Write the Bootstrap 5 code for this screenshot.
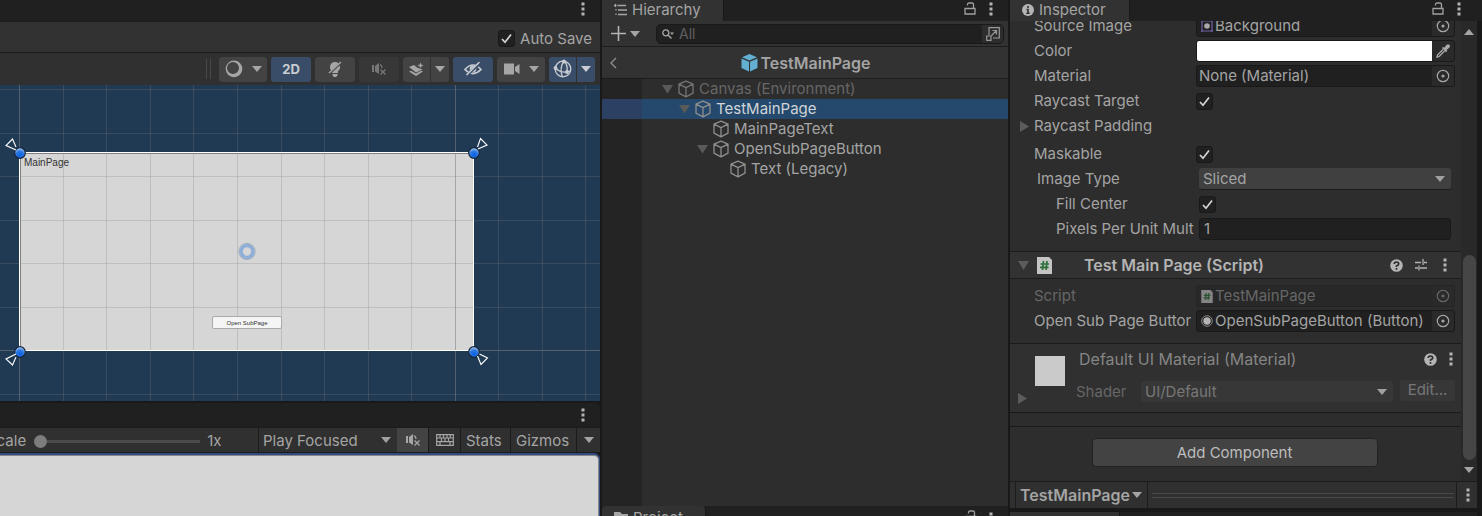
<!DOCTYPE html>
<html lang="en" data-bs-theme="dark">
<head>
<meta charset="utf-8">
<meta name="viewport" content="width=device-width, initial-scale=1">
<title>TestMainPage - Editor</title>
<link href="https://cdn.jsdelivr.net/npm/bootstrap@5.3.0/dist/css/bootstrap.min.css" rel="stylesheet">
<style>
:root{--edge:#191919;--bar:#202020;--pane:#2d2d2d;--head:#323232;--tool:#303030;--txt:#a4a4a4;--dim:#666;
--arrow:url("data:image/svg+xml,%3Csvg xmlns='http://www.w3.org/2000/svg' viewBox='0 0 10 6'%3E%3Cpath d='M0 0h10L5 6z' fill='%23a0a0a0'/%3E%3C/svg%3E");
--tick:url("data:image/svg+xml,%3Csvg xmlns='http://www.w3.org/2000/svg' viewBox='0 0 17 17'%3E%3Cpath d='M4 9l3 3.3L13 4.5' fill='none' stroke='%23d4d4d4' stroke-width='1.7'/%3E%3C/svg%3E")}
body{font-family:Inter,"Liberation Sans",sans-serif;font-size:15px;line-height:20px;color:var(--txt);background:var(--edge);overflow:hidden}
svg{display:block;flex:none}
button{color:inherit;padding:0;border:0;background:none;line-height:20px}
.editor{display:grid;grid-template-columns:minmax(0,602fr) minmax(0,408fr) minmax(0,472fr);height:100vh}
.column-pane{min-width:0;min-height:0;overflow:hidden}
.column-gap{padding-right:2px}
.tabs{background:var(--bar);height:21px;flex:none}
.tab-title{background:var(--head);height:21px;padding:0 0 1px 12px;gap:5px;border-right:1px solid #191919}
.tab-short{height:24px;border-radius:4px 4px 0 0}
.kebab{width:20px;height:17px;display:flex;align-items:center;justify-content:center}
.lock{margin:2px 5px 0 auto}
.tabs-right{padding-right:7px}
.tick{appearance:none;width:17px;height:17px;margin:0;flex:none;background:#202020 var(--tick) center/17px no-repeat;border:1px solid #191919;border-radius:3px}
/* scene */
.save-bar{height:31px;background:var(--head);border-top:1px solid #1c1c1c;padding:3px 8px 0 0;gap:5px;flex:none}
.scene-tools{height:33px;background:var(--tool);border-top:1px solid #1c1c1c;gap:4px;padding:0 5px 0 0;flex:none}
.tool{height:25px;width:40px;background:#434343;border-radius:3px;color:#a6a6a6;display:flex;align-items:center;justify-content:center;gap:9px;font-weight:700;font-size:13px}
.tool-wide{width:48px}.tool-main{width:27px;border-radius:3px 0 0 3px}.tool-drop{width:18px;border-radius:0 3px 3px 0}
.tool-on{background:#3a4d68;color:#c9cdd3}.tool-off{background:#373737;color:#777}
.split-tool{gap:1px}
.grip{width:5px;height:20px;border:solid #484848;border-width:0 1px;margin-right:4px}
.scene-view{position:relative;height:316px;background:#213a54;overflow:hidden;flex:none}
.scene-button{position:absolute;left:212px;top:231px;width:70px;height:13px;background:#f5f5f5;border:1px solid #aaa;border-radius:2px;color:#323232;font:6px/10px "Liberation Sans",sans-serif}
.scene-label{font:10px "Liberation Sans",sans-serif;fill:#323232}
.game-tabs{height:24px;margin-top:2px;padding-top:3px;border-radius:0 5px 0 0}
.game-tools{height:26px;background:var(--tool);border:solid #1c1c1c;border-width:1px 0;flex:none}
.game-tools>*{height:24px;border-right:1px solid #1c1c1c}
.game-tools>*:last-child{border-right:0}
.game-tools>.word{padding:2px 0 0 5px;text-align:left}
.scale-box{width:259px;flex:none;padding-top:2px}
.scale-box label{margin-left:-13px}
.scale-range{appearance:none;width:166px;height:14px;margin:0 7px 0 8px;background:linear-gradient(#4b4b4b,#4b4b4b) center/100% 3px no-repeat}
.scale-range::-webkit-slider-thumb{appearance:none;width:13px;height:13px;border-radius:50%;background:#7d7d7d}
.drop{appearance:none;color:var(--txt);border:0;background:var(--arrow) right 6px center/10px 6px no-repeat;padding:0 4px}
.play-mode{width:138px;padding-top:2px}
.cell{width:32px}.cell-wide{width:66px}.cell-last{width:23px}
.game-view{background:#d6d6d6;border:1px solid #888;border-left:0;border-bottom:0;border-radius:0 5px 0 0;box-shadow:0 -1px 0 1px #324a80;margin-top:2px;margin-right:1px;flex:1}
/* hierarchy */
.tab-hier{width:122px}.tab-insp{width:120px}.tab-proj{width:104px}
.find-bar{height:26px;background:var(--head);border-bottom:1px solid #1c1c1c;padding:0 4px 0 9px;flex:none}
.find-box{background:#202020;border:1px solid #191919;border-radius:5px;height:20px;overflow:hidden;margin-left:16px;padding-left:5px}
.find-box input{background:none;border:0;outline:0;width:100%;color:var(--txt);padding:0 0 0 5px;font-size:14px;line-height:18px}
.find-box input::placeholder{color:#5f5f5f;opacity:1}
.find-pick{width:21px;height:20px;flex:none;background:#2d2d2d;display:flex;align-items:center;justify-content:center}
.crumb{height:32px;background:var(--head);border-bottom:1px solid #1c1c1c;flex:none;padding-right:14px;font-size:16px}
.crumb a{color:var(--txt);text-decoration:none}
.crumb-name{gap:3px}
.tree{background:linear-gradient(90deg,#242424 40px,var(--pane) 40px);flex:1;margin-bottom:2px}
.tree li{height:20px;padding-left:57px;gap:4px}
.fold{color:#5a5a5a;margin-right:-6px}
.tree .lv1{padding-left:74px}.tree .lv2{padding-left:92px}.tree .lv3{padding-left:110px}.tree .lv4{padding-left:127px}
.tree .picked{background:linear-gradient(90deg,#2b4062 40px,#24496c 40px);color:#d0d4d8}
.project{height:10px}
/* inspector */
.insp-right{padding-right:13px}
.sheet{background:var(--pane);overflow:hidden}
.props{padding:0 6px 8px 24px}
.props.cut{margin-top:-6px}
.props.tight{padding-top:6px}
.prop{height:22px;margin-bottom:3px;display:flex;align-items:center}
.prop.foldout{margin-left:-15px;margin-bottom:6px}
.prop>label,.prop>.name{width:157px;margin-right:5px;flex:none;overflow:hidden;white-space:nowrap}
.prop.sub>label{width:165px;margin-right:0;padding-left:3px}
.prop.sub2>label{width:163px;margin-right:2px;padding-left:22px}
.slot{flex:1;height:22px;background:#202020;border:1px solid #191919;border-radius:3px;overflow:hidden;padding-left:2px;min-width:0}
.slot input{background:none;border:0;outline:0;flex:1;min-width:0;color:inherit;padding:0;line-height:20px}
.slot .pick{width:22px;height:20px;background:#2a2a2a;display:flex;justify-content:center;align-items:center}
.slot-icon{margin:0 1px 0 1px}
.slot .swatch{appearance:none;background:#fff;height:20px;flex:1;border:0;padding:0;margin-left:-2px}
.swatch::-webkit-color-swatch-wrapper{padding:0}.swatch::-webkit-color-swatch{border:0}
.combo{height:22px;background-color:#404040;border-radius:3px;border-bottom:1px solid #1c1c1c;line-height:20px}
.type-combo{width:252px}
.part-head{height:28px;background:var(--head);border:solid #1c1c1c;border-width:1px 0;padding:0 6px 0 8px;font-weight:600;font-size:16px;color:#b4b4b4}
.faded{color:var(--dim)}
.faded .slot{background:#282828;border-color:#242424}
.material{background:var(--tool);border:solid #1a1a1a;border-width:1px 0;height:70px;padding:5px 6px 0 8px}
.mat-name{color:#858585;font-size:16px}
.mat-name .q{margin:0 12px 0 auto}
.mat-name .more{margin-right:2px}
.thumb{width:30px;height:30px;background:#cacaca;margin:7px 14px 0 8px}
.shader-label{width:65px;margin:4px 0 0 -3px}
.combo.dimmed{color:#777;background-color:#373737;border-color:#303030;margin:4px 7px 0 0}
.edit-btn{width:55px;height:21px;background:#373737;border-radius:3px;color:#777}
.add-area{border-top:1px solid #1a1a1a;margin-top:13px;padding:11px 2px 0 0}
.add-btn{width:286px;height:29px;background:#434343;border:1px solid #222;border-radius:4px;color:#bdbdbd}
.rail{width:16px;background:#292929;flex:none;margin-right:5px}
.rail-up{transform:rotate(180deg)}
.rail .thumb-bar{width:13px;height:205px;border-radius:7px;background:#464646;margin-bottom:7px}
.preview-bar{height:27px;border-top:1px solid #1c1c1c;background:var(--tool);margin-right:5px;flex:none;padding-left:5px}
.preview-bar .pick-name{border:solid #1c1c1c;border-width:0 1px;padding:0 5px 0 4px;font-weight:600;font-size:16px;gap:2px}
.rule{flex:1;height:5px;margin:0 2px 0 4px;border:solid #484848;border-width:1px 0}
.preview-more{border-left:1px solid #1c1c1c;padding:0 7px 0 9px}
.below{height:4px;margin:4px 5px 0 0}
.below .tab-title{width:110px;height:4px}
</style>
</head>
<body>
<svg width="0" height="0" class="position-absolute" aria-hidden="true">
<defs>
<symbol id="dots" viewBox="0 0 4 14"><path d="M.5.5h3v3h-3zM.5 5.500h3v3h-3zM.5 10.500h3v3h-3z" fill="#b4b4b4"/></symbol>
<symbol id="lock" viewBox="0 0 12 13"><path d="M1 6.500h10v5.500H1zM3.500 3.500V2.500Q3.500 1 5 1h3Q9.500 1 9.500 2.500v4" fill="none" stroke="#a0a0a0" stroke-width="1.300"/></symbol>
<symbol id="down" viewBox="0 0 10 6"><path d="M0 0h10L5 6z" fill="currentColor"/></symbol>
<symbol id="cube" viewBox="0 0 18 18"><path d="M9 1.200l7 3v9L9 16.800l-7-3.600v-9zM2 4.200l7 3.500 7-3.500M9 7.700v9" fill="none" stroke="#8e8e8e" stroke-width="1.300" stroke-linejoin="round"/></symbol>
<symbol id="target" viewBox="0 0 14 14"><circle cx="7" cy="7" r="5.700" fill="none" stroke="currentColor" stroke-width="1.200"/><circle cx="7" cy="7" r="1.600" fill="currentColor"/></symbol>
<symbol id="mute" viewBox="0 0 14 12"><path d="M0 2h2v7H0zM3 3l4-3v11L3 8.500z" fill="currentColor"/><path d="M8 1.500q2 1 2 3.500M8.500 6.500l5 5M13.500 6.500l-5 5" stroke="currentColor" stroke-width="1.300" fill="none"/></symbol>
<symbol id="help" viewBox="0 0 13 13"><circle cx="6.500" cy="6.500" r="6.300" fill="#b4b4b4"/><path d="M4.300 5Q4.300 3 6.500 3T8.700 5Q8.700 6 6.500 7v1M6.500 9v1.700" fill="none" stroke="#2d2d2d" stroke-width="1.700"/></symbol>
<symbol id="script" viewBox="0 0 15 17"><path d="M0 0h12l3 3v14H0z" fill="#c4c4c4"/><path d="M6.500 4l-1 9M10 4L9 13M3.500 7h8.500M3 10.300h8.500" stroke="#2b7039" stroke-width="1.700"/></symbol>
<symbol id="fold-open" viewBox="0 0 20 9"><path d="M3 0h11L8.500 8.500z" fill="currentColor"/></symbol>
<radialGradient id="bead" cx=".5" cy=".7" r=".7"><stop offset="0" stop-color="#0b62e6"/><stop offset=".5" stop-color="#2a77e2"/><stop offset="1" stop-color="#b5cff0"/></radialGradient>
</defs>
</svg>
<main class="editor">
<section class="column-pane column-gap d-flex flex-column">
 <div class="tabs tabs-right d-flex justify-content-end"><button class="kebab" aria-label="Scene menu"><svg width="4" height="14"><use href="#dots"/></svg></button></div>
 <div class="save-bar d-flex align-items-center justify-content-end"><input class="tick" type="checkbox" id="save" checked><label for="save">Auto Save</label></div>
 <div class="scene-tools d-flex align-items-center justify-content-end">
  <span class="grip"></span>
  <button class="tool tool-wide" aria-label="Shading"><svg width="18" height="18" viewBox="0 0 18 18"><path fill-rule="evenodd" d="M9 .500a8.300 8.300 0 1 1 0 16.700A8.300 8.300 0 0 1 9 .500zM8 2a6 6 0 1 0 0 12A6 6 0 0 0 8 2z" fill="currentColor"/></svg><svg width="10" height="6"><use href="#down"/></svg></button>
  <button class="tool tool-on">2D</button>
  <button class="tool" aria-label="Lighting"><svg width="14" height="17" viewBox="0 0 14 17"><path d="M7 1a5 5 0 0 0-3 9v2h6v-2A5 5 0 0 0 7 1zM4.500 13h5v1.500L8 16H6l-1.500-1.500z" fill="currentColor"/><path d="M1 13L14 1" stroke="#434343" stroke-width="2"/><path d="M1 12L13 1" stroke="currentColor" stroke-width="1.400"/></svg></button>
  <button class="tool tool-off" aria-label="Audio"><svg width="14" height="12"><use href="#mute"/></svg></button>
  <div class="d-flex split-tool"><button class="tool tool-main" aria-label="Effects"><svg width="15" height="15" viewBox="0 0 15 15"><path d="M0 5l5-2 3 2.500L12 7l2 0-7 3.500zM0 9.500l2-.8 5 2.800 5-2.800 2 .8L7 14z" fill="currentColor"/><path d="M11.500 0l1 2.500L15 3.500l-2.500 1-1 2.500-1-2.500L8 3.500l2.500-1z" fill="currentColor" stroke="#434343" stroke-width=".4"/></svg></button><button class="tool tool-drop" aria-label="Effects options"><svg width="10" height="6"><use href="#down"/></svg></button></div>
  <button class="tool tool-on" aria-label="Visibility"><svg width="18" height="14" viewBox="0 0 18 14"><path d="M1 7.500Q9-1.500 17 7.500 9 15.500 1 7.500z" fill="none" stroke="currentColor" stroke-width="1.700"/><circle cx="9" cy="7" r="3.300" fill="currentColor"/><path d="M2 14L16 1" stroke="#3a4d68" stroke-width="3"/><path d="M2.500 13L15.500 0" stroke="currentColor" stroke-width="1.600"/></svg></button>
  <button class="tool tool-wide" aria-label="Camera"><svg width="16" height="12" viewBox="0 0 16 12"><path d="M0 .5h10v11H0zM11 4l4.500-3v10L11 8z" fill="currentColor"/></svg><svg width="10" height="6"><use href="#down"/></svg></button>
  <div class="d-flex split-tool"><button class="tool tool-main tool-on" aria-label="Gizmos"><svg width="20" height="20" viewBox="0 0 20 20"><g fill="none" stroke="currentColor" stroke-width="1.300"><circle cx="10" cy="10" r="7.800"/><path d="M11 2Q6 9 9.500 18M11 2q4 4 3 11M2.500 9q5 5 11.500 4l4-1.500"/></g><g fill="currentColor"><circle cx="11" cy="2.500" r="1.900"/><circle cx="2.500" cy="9" r="1.900"/><circle cx="14" cy="13" r="1.900"/></g></svg></button><button class="tool tool-drop tool-on" aria-label="Gizmo options"><svg width="10" height="6"><use href="#down"/></svg></button></div>
 </div>
 <div class="scene-view">
  <svg width="100%" height="316">
   <path d="M20 68h454v198H20z" fill="#d6d6d6"/>
   <path d="M63.500 0v316M106.500 0v316M150.500 0v316M193.500 0v316M237.500 0v316M281.500 0v316M324.500 0v316M368.500 0v316M411.500 0v316M498.500 0v316M542.500 0v316M585.500 0v316M0 4.500h602M0 48.500h602M0 91.500h602M0 135.500h602M0 178.500h602M0 222.500h602M0 309.500h602" stroke="#808080" stroke-opacity=".26"/>
   <path d="M19.500 0v316M455.500 0v316M0 265.500h602" stroke="#808080" stroke-opacity=".55"/>
   <path d="M20.500 266V68.500H473" fill="none" stroke="#808080"/>
   <path d="M19.500 67.500h454v198h-454z" fill="none" stroke="#fff"/>
   <text x="24" y="81" class="scene-label">MainPage</text>
   <g fill="none"><circle cx="247" cy="166.500" r="6" stroke="#8fafd8" stroke-width="3.600"/><circle cx="247" cy="166.500" r="8.200" stroke="#a4b0be" stroke-width="1"/></g>
   <g fill="url(#bead)" stroke="#14253a" stroke-width="1.200"><circle cx="20" cy="68" r="5.300"/><circle cx="474" cy="68" r="5.300"/><circle cx="20" cy="267" r="5.300"/><circle cx="474" cy="267" r="5.300"/></g>
   <g fill="none" stroke="#fff" stroke-width="1.100"><path d="M16 65L6 60.500 12.500 54l3.500 8M477.500 62l3-8.500 6.500 6.500-9 4M16 269l-10 5 6.500 6 3.500-8M477.500 271l3.500 8.500 6.500-6.500-8-4"/></g>
  </svg>
  <button class="scene-button">Open SubPage</button>
 </div>
 <div class="tabs tabs-right game-tabs d-flex justify-content-end"><button class="kebab" aria-label="Game menu"><svg width="4" height="14"><use href="#dots"/></svg></button></div>
 <div class="game-tools d-flex">
  <div class="scale-box d-flex align-items-center"><label for="scale">Scale</label><input id="scale" class="scale-range" type="range" min="1" max="5" step="1" value="1"><span>1x</span></div>
  <select class="drop play-mode" aria-label="Play mode"><option>Play Focused</option></select>
  <button class="tool cell rounded-0" aria-label="Mute"><svg width="14" height="12"><use href="#mute"/></svg></button>
  <button class="cell d-flex align-items-center justify-content-center" aria-label="Shortcuts"><svg width="18" height="12" viewBox="0 0 18 12"><path d="M.7.700h16.600v10.600H.7zM.7 4h16.600M.7 7.700h16.600M4 .700V4M7.500.700V4M11 .700V4M14.300.700V4M5.500 4v3.700M9 4v3.700M12.500 4v3.700M4 7.700v3.600M14 7.700v3.600" fill="none" stroke="#a6a6a6" stroke-width="1.200"/></svg></button>
  <button class="word flex-fill">Stats</button>
  <button class="word cell-wide">Gizmos</button>
  <button class="cell-last d-flex align-items-center justify-content-center" aria-label="Gizmo list"><svg width="10" height="6"><use href="#down"/></svg></button>
 </div>
 <div class="game-view"></div>
</section>

<section class="column-pane column-gap d-flex flex-column">
 <div class="tabs tabs-right d-flex">
  <div class="tab-title tab-hier d-flex align-items-center"><svg width="13" height="12" viewBox="0 0 13 12"><path d="M0 1.500h2.500M3.500 1.500H12M4 6h9M4 10.500h9M1.500 0v3M2 5v1.500M2 9.500v1.500" stroke="#a6a6a6" stroke-width="1.300"/></svg>Hierarchy</div>
  <svg width="12" height="13" class="lock"><use href="#lock"/></svg><button class="kebab" aria-label="Hierarchy menu"><svg width="4" height="14"><use href="#dots"/></svg></button>
 </div>
 <div class="find-bar d-flex align-items-center">
  <button class="d-flex align-items-center" aria-label="Create"><svg width="15" height="15" viewBox="0 0 15 15"><path d="M7.500 0v15M0 7.500h15" stroke="#b4b4b4" stroke-width="1.600"/></svg><svg width="10" height="6" class="ms-1"><use href="#down"/></svg></button>
  <div class="find-box d-flex align-items-center flex-fill"><svg width="12" height="10" viewBox="0 0 12 10"><circle cx="3.800" cy="3.800" r="3" fill="none" stroke="#a6a6a6" stroke-width="1.300"/><path d="M6 6l3.500 3.500" stroke="#a6a6a6" stroke-width="1.400"/><path d="M8 3.500h4L10 6z" fill="#a6a6a6"/></svg><input type="text" placeholder="All" aria-label="Search"><button class="find-pick" aria-label="Search window"><svg width="14" height="14" viewBox="0 0 14 14"><path d="M3 8V.700h10.300v10.300H7M.7 9h4.300v4.300H.7zM5.500 8.500L10.500 3.500M6.500 3.500h4v4" fill="none" stroke="#999" stroke-width="1.200"/></svg></button></div>
 </div>
 <div class="crumb d-flex align-items-center">
  <a href="#" class="ps-2" aria-label="Back"><svg width="7" height="12" viewBox="0 0 7 12"><path d="M6 1L1 6l5 5" fill="none" stroke="#8c8c8c" stroke-width="1.400"/></svg></a>
  <div class="crumb-name d-flex align-items-center mx-auto fw-semibold"><svg width="17" height="18" viewBox="0 0 17 18"><path d="M8.500 0l7.500 3.300-7.500 3.300L1 3.300zM.5 4.500L8 7.800V17.500L.5 14zM16.500 4.500L9 7.800v9.700l7.500-3.500z" fill="#62afd2"/></svg>TestMainPage</div>
 </div>
 <ul class="tree list-unstyled mb-0">
  <li class="d-flex align-items-center faded"><svg class="fold" width="20" height="9"><use href="#fold-open"/></svg><svg width="18" height="18" opacity=".75"><use href="#cube"/></svg><span>Canvas (Environment)</span></li>
  <li class="d-flex align-items-center lv1 picked"><svg class="fold" width="20" height="9"><use href="#fold-open"/></svg><svg width="18" height="18"><use href="#cube"/></svg><span>TestMainPage</span></li>
  <li class="d-flex align-items-center lv3"><svg width="18" height="18"><use href="#cube"/></svg><span>MainPageText</span></li>
  <li class="d-flex align-items-center lv2"><svg class="fold" width="20" height="9"><use href="#fold-open"/></svg><svg width="18" height="18"><use href="#cube"/></svg><span>OpenSubPageButton</span></li>
  <li class="d-flex align-items-center lv4"><svg width="18" height="18"><use href="#cube"/></svg><span>Text (Legacy)</span></li>
 </ul>
 <div class="tabs tabs-right project d-flex align-items-start">
  <div class="tab-title tab-short tab-proj d-flex align-items-center"><svg width="14" height="11" viewBox="0 0 14 11"><path d="M0 0h6l2 2h6v9H0z" fill="#a6a6a6"/></svg>Project</div>
  <svg width="12" height="13" class="ms-auto mt-1 me-1"><use href="#lock"/></svg><button class="kebab mt-1" aria-label="Project menu"><svg width="4" height="14"><use href="#dots"/></svg></button>
 </div>
</section>

<section class="column-pane d-flex flex-column">
 <div class="tabs insp-right d-flex">
  <div class="tab-title tab-insp d-flex align-items-center"><svg width="12" height="12" viewBox="0 0 12 12"><circle cx="6" cy="6" r="6" fill="#b4b4b4"/><path d="M6 2v2M4.500 5.500H6V9M4.300 9.300h3.400" fill="none" stroke="#323232" stroke-width="1.600"/></svg>Inspector</div>
  <svg width="12" height="13" class="lock"><use href="#lock"/></svg><button class="kebab" aria-label="Inspector menu"><svg width="4" height="14"><use href="#dots"/></svg></button>
 </div>
 <div class="d-flex flex-fill overflow-hidden">
  <div class="sheet flex-fill">
   <div class="props cut">
    <div class="prop"><label for="src">Source Image</label><div class="slot d-flex align-items-center"><svg width="14" height="14" viewBox="0 0 14 14" class="slot-icon"><path d="M2 1v12M12 1v12M1 2h12M1 12h12" stroke="#7360a8" stroke-width="1.200"/><circle cx="7" cy="7" r="2.800" fill="#aaa"/></svg><input id="src" value="Background"><button class="pick" aria-label="Pick image"><svg width="14" height="14"><use href="#target"/></svg></button></div></div>
    <div class="prop"><label for="col">Color</label><div class="slot d-flex align-items-center"><input id="col" class="swatch" type="color" value="#ffffff"><button class="pick" aria-label="Eyedropper"><svg width="14" height="14" viewBox="0 0 14 14"><path d="M8 4l2.500-3Q12-.5 13.300.800t0 3L10.500 6l.8 1-1.300 1.200L6 4l1.200-1.200z" fill="#aaa"/><path d="M7 5.500L1.500 11 1 13.200l2.200-.7L8.500 7" fill="none" stroke="#aaa" stroke-width="1.300"/></svg></button></div></div>
    <div class="prop"><label for="mat">Material</label><div class="slot d-flex align-items-center"><input id="mat" value="None (Material)"><button class="pick" aria-label="Pick material"><svg width="14" height="14"><use href="#target"/></svg></button></div></div>
    <div class="prop"><label for="ray">Raycast Target</label><input id="ray" class="tick" type="checkbox" checked></div>
    <div class="prop foldout"><svg width="15" height="11" viewBox="0 0 15 11"><path d="M1 0v11l9-5.500z" fill="#5c5c5c"/></svg><span class="name">Raycast Padding</span></div>
    <div class="prop"><label for="msk">Maskable</label><input id="msk" class="tick" type="checkbox" checked></div>
    <div class="prop sub"><label for="typ">Image Type</label><select id="typ" class="drop combo type-combo"><option>Sliced</option></select></div>
    <div class="prop sub2"><label for="fil">Fill Center</label><input id="fil" class="tick" type="checkbox" checked></div>
    <div class="prop sub2"><label for="ppu">Pixels Per Unit Mult</label><div class="slot d-flex me-1 ps-1"><input id="ppu" value="1"></div></div>
   </div>
   <div class="part-head d-flex align-items-center"><svg width="11" height="9" viewBox="0 0 11 9"><path d="M0 0h11L5.500 9z" fill="#5c5c5c"/></svg><svg width="15" height="17" class="ms-2"><use href="#script"/></svg><span class="ms-4 ps-2">Test Main Page (Script)</span><svg width="13" height="13" class="ms-auto me-2"><use href="#help"/></svg><svg width="12" height="12" viewBox="0 0 12 12" class="ms-1 me-3"><path d="M0 3.500h6M9 3.500h3M8 0v6M0 9h3M5 9h7M4 6.500v5" stroke="#b4b4b4" stroke-width="1.300"/></svg><svg width="4" height="14" class="me-2"><use href="#dots"/></svg></div>
   <div class="props tight">
    <div class="prop faded"><label for="scr">Script</label><div class="slot d-flex align-items-center"><svg width="14" height="13" class="slot-icon" opacity=".6"><use href="#script"/></svg><input id="scr" value="TestMainPage" readonly><button class="pick" aria-label="Pick script"><svg width="14" height="14"><use href="#target"/></svg></button></div></div>
    <div class="prop"><label for="osp">Open Sub Page Button</label><div class="slot d-flex align-items-center"><svg width="14" height="12" viewBox="0 0 12 12" class="slot-icon"><circle cx="6" cy="6" r="5.300" fill="none" stroke="#888" stroke-width="1"/><circle cx="6" cy="6" r="3.700" fill="#b4b4b4"/></svg><input id="osp" value="OpenSubPageButton (Button)"><button class="pick" aria-label="Pick button"><svg width="14" height="14"><use href="#target"/></svg></button></div></div>
   </div>
   <div class="material d-flex">
    <svg width="9" height="11" viewBox="0 0 9 11" class="align-self-end mb-2"><path d="M0 0v11l9-5.500z" fill="#5c5c5c"/></svg>
    <div class="thumb flex-shrink-0"></div>
    <div class="flex-fill">
     <div class="mat-name d-flex align-items-center"><span>Default UI Material (Material)</span><svg width="13" height="13" class="q"><use href="#help"/></svg><svg width="4" height="14" class="more"><use href="#dots"/></svg></div>
     <div class="d-flex align-items-center faded pt-2"><label for="shd" class="shader-label">Shader</label><select id="shd" class="drop combo dimmed flex-fill"><option>UI/Default</option></select><button class="edit-btn">Edit...</button></div>
    </div>
   </div>
   <div class="add-area text-center"><button class="add-btn">Add Component</button></div>
  </div>
  <div class="rail d-flex flex-column align-items-center"><svg width="10" height="6" class="mt-2 rail-up"><use href="#down"/></svg><span class="thumb-bar mt-auto"></span><svg width="10" height="6" class="mb-2"><use href="#down"/></svg></div>
 </div>
 <div class="preview-bar d-flex align-items-stretch"><button class="pick-name d-flex align-items-center">TestMainPage<svg width="10" height="6"><use href="#down"/></svg></button><span class="rule align-self-center"></span><button class="preview-more d-flex align-items-center" aria-label="Preview menu"><svg width="4" height="14"><use href="#dots"/></svg></button></div>
 <div class="tabs below"><div class="tab-title"></div></div>
</section>
</main>
<script src="https://cdn.jsdelivr.net/npm/bootstrap@5.3.0/dist/js/bootstrap.bundle.min.js"></script>
</body>
</html>
